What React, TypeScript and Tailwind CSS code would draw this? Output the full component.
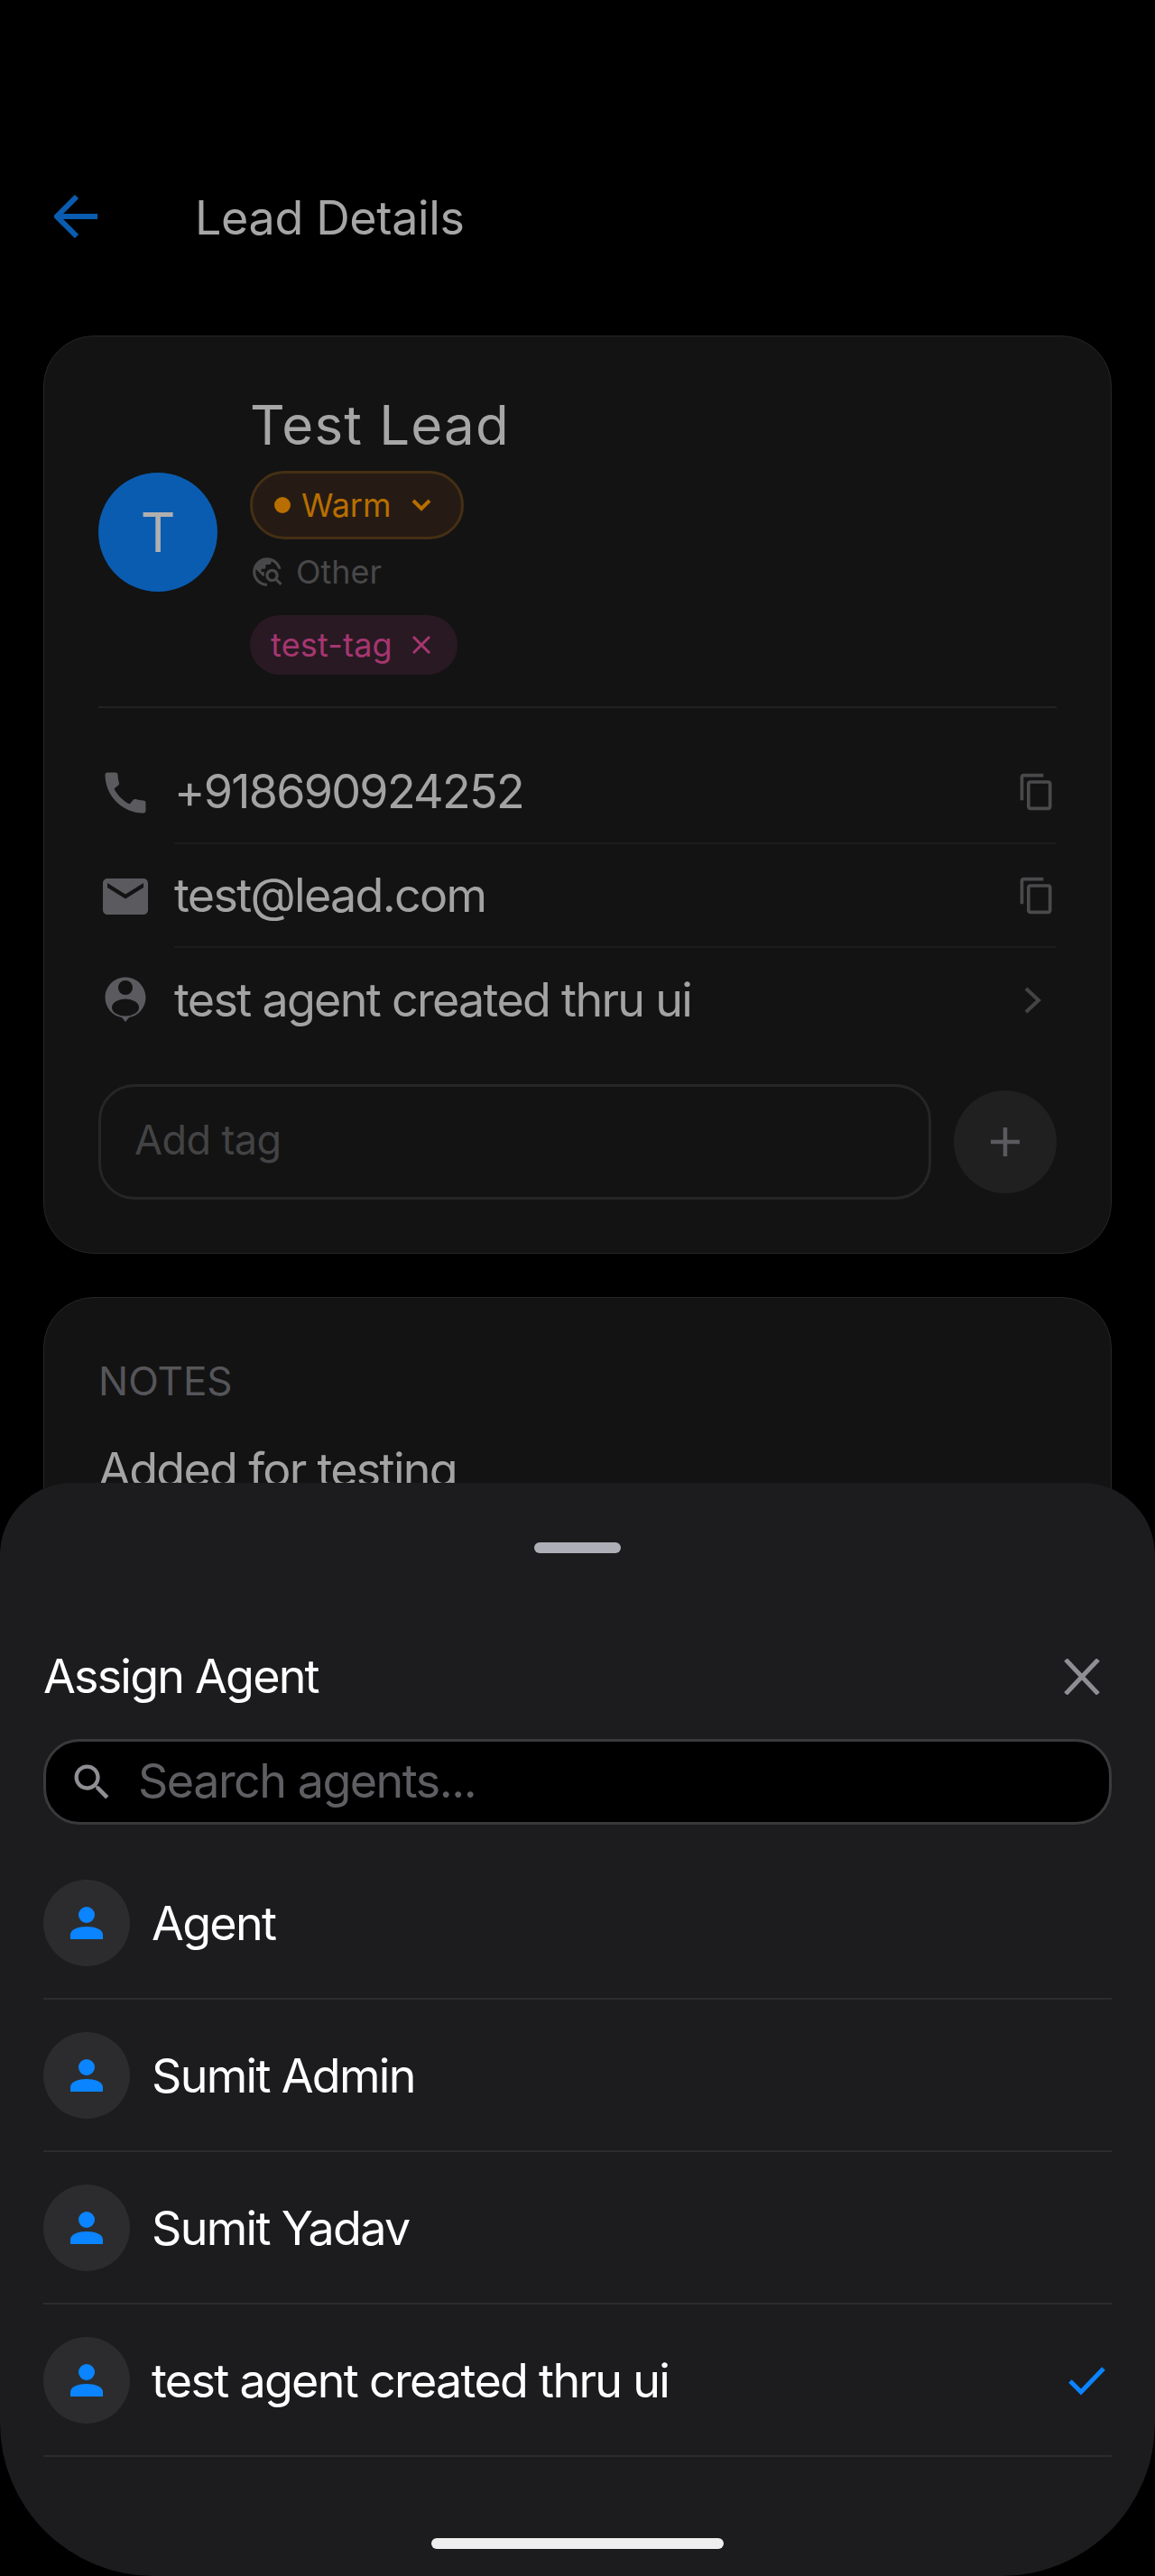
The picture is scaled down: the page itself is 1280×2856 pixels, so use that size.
import React from 'react';

const agents = ['Agent', 'Sumit Admin', 'Sumit Yadav', 'test agent created thru ui'];

const CopyIcon = () => (
    <svg width="44" height="44" viewBox="0 0 24 24" fill="#4a4a4c" className="shrink-0">
        <path d="M16 1H4c-1.1 0-2 .9-2 2v14h2V3h12V1zm3 4H8c-1.1 0-2 .9-2 2v14c0 1.1.9 2 2 2h11c1.1 0 2-.9 2-2V7c0-1.1-.9-2-2-2zm0 16H8V7h11v14z" />
    </svg>
);

const PhoneIcon = () => (
    <svg width="60" height="60" viewBox="0 0 24 24" fill="#5a5a5f">
        <path d="M20.01 15.38c-1.23 0-2.42-.2-3.53-.56-.35-.12-.74-.03-1.01.24l-1.57 1.97c-2.83-1.35-5.48-3.9-6.89-6.83l1.95-1.66c.27-.28.35-.67.24-1.02-.37-1.11-.56-2.3-.56-3.53 0-.54-.45-.99-.99-.99H4.19C3.65 3 3 3.24 3 3.99 3 13.28 10.73 21 20.01 21c.71 0 .99-.63.99-1.18v-3.45c0-.54-.45-.99-.99-.99z" />
    </svg>
);

const MailIcon = () => (
    <svg width="60" height="60" viewBox="0 0 24 24" fill="#5a5a5f">
        <path d="M20 4H4c-1.1 0-1.99.9-1.99 2L2 18c0 1.1.9 2 2 2h16c1.1 0 2-.9 2-2V6c0-1.1-.9-2-2-2zm0 4l-8 5-8-5V6l8 5 8-5v2z" />
    </svg>
);

// round badge with head and body cut out, small tip at the bottom
const AgentPinIcon = () => (
    <svg width="60" height="60" viewBox="0 0 60 60">
        <path d="M30 4.500c12.400 0 22.500 10 22.500 22.500 0 11-8 20.200-18.500 22.100L30 54l-4-4.900C15.500 47.200 7.500 38 7.500 27 7.500 14.500 17.600 4.500 30 4.500z" fill="#5a5a5f" />
        <circle cx="30" cy="16" r="8" fill="#131313" />
        <ellipse cx="30" cy="38" rx="15" ry="9.500" fill="#131313" />
    </svg>
);

const TravelExploreIcon = () => (
    <svg width="38" height="38" viewBox="0 0 24 24" fill="#48484a" className="shrink-0">
        <path d="M19.3 16.9c.4-.7.7-1.500.7-2.400 0-2.500-2-4.500-4.500-4.500S11 12 11 14.500s2 4.500 4.500 4.500c.9 0 1.700-.3 2.400-.7l3.200 3.200 1.400-1.400-3.200-3.200zm-3.800.1c-1.400 0-2.500-1.100-2.500-2.500s1.100-2.500 2.500-2.500 2.500 1.100 2.500 2.500-1.100 2.500-2.500 2.500zM12 20v2C6.480 22 2 17.520 2 12S6.480 2 12 2c4.840 0 8.870 3.440 9.800 8h-2.070c-.64-2.460-2.400-4.470-4.730-5.410V5c0 1.100-.9 2-2 2h-2v2c0 .55-.45 1-1 1H8v2h2v3H9l-4.790-4.790C4.080 10.790 4 11.380 4 12c0 4.410 3.590 8 8 8z" />
    </svg>
);

const PersonIcon = () => (
    <svg width="36" height="36" viewBox="0 0 36 36" fill="#0a84ff">
        <circle cx="18" cy="9" r="9" />
        <path d="M0 36V31C0 25 9 22 18 22s18 3 18 9v5H0z" />
    </svg>
);

const ContactRow: React.FC<{icon: React.ReactNode; text: string; right: React.ReactNode; last?: boolean}> = ({icon, text, right, last}) => (
    <div className="flex items-center h-[115px]">
        <div className="w-[60px] shrink-0 flex justify-center">{icon}</div>
        <div className={`flex-1 ml-[24px] h-full flex items-center justify-between ${last ? '' : 'border-b-2 border-[#1c1c1c]'}`}>
            <span className="pt-[1px] text-[52px] leading-[60px] tracking-[-1.7px] text-[#a3a3a3]">{text}</span>
            {right}
        </div>
    </div>
);

export default function App() {
    return (
        <div className="relative w-[1280px] h-[2856px] bg-black overflow-hidden font-['Inter',sans-serif]">
            <div className="pt-[200px]">
                <div className="flex items-center h-[80px] pl-[60px]">
                    <svg width="48" height="48" viewBox="0 0 48 48" fill="none" stroke="#0a5cb0" strokeWidth="6">
                        <path d="M48 24H3" />
                        <path d="M25 2L3 24l22 22" />
                    </svg>
                    <span className="ml-[108px] pt-[4px] text-[52px] leading-[80px] tracking-[-0.35px] text-[#a6a6a6]">Lead Details</span>
                </div>

                <div className="mx-[48px] mt-[92px] h-[1018px] rounded-[56px] bg-[#131313] border border-[#262626] px-[60px] pt-[59px]">
                    <div className="flex items-center gap-[36px] border-b-2 border-[#222222] pb-[35px]">
                        <div className="w-[132px] h-[132px] rounded-full bg-[#0a5cb0] flex items-center justify-center text-[60px] text-[#b0b0b0]">T</div>
                        <div className="flex flex-col items-start">
                            <div className="h-[80px] text-[60px] leading-[78px] tracking-[1.2px] text-[#a6a6a6]">Test Lead</div>
                            <div className="mt-[10px] h-[76px] rounded-full bg-[#251b14] border-[3px] border-[#452f14] flex items-center pl-[24px] pr-[32px]">
                                <div className="w-[18px] h-[18px] rounded-full bg-[#b86e00]" />
                                <span className="ml-[12px] text-[36px] text-[#b86e00]">Warm</span>
                                <svg width="24" height="16" viewBox="0 0 24 16" fill="none" stroke="#b86e00" strokeWidth="4" className="ml-[21px]">
                                    <path d="M3 3l9 9 9-9" />
                                </svg>
                            </div>
                            <div className="mt-[15px] h-[42px] flex items-center text-[36px] text-[#48484a]">
                                <TravelExploreIcon />
                                <span className="ml-[13px]">Other</span>
                            </div>
                            <div className="mt-[27px] h-[66px] rounded-full bg-[#291923] flex items-center pl-[23px] pr-[30px]">
                                <span className="text-[36px] tracking-[0.2px] text-[#a63670]">test-tag</span>
                                <svg width="20" height="20" viewBox="0 0 20 20" fill="none" stroke="#a63670" strokeWidth="3" className="ml-[22px]">
                                    <path d="M1 1l18 18M19 1L1 19" />
                                </svg>
                            </div>
                        </div>
                    </div>

                    <div className="mt-[36px]">
                        <ContactRow icon={<PhoneIcon />} text="+918690924252" right={<CopyIcon />} />
                        <ContactRow icon={<MailIcon />} text="test@lead.com" right={<CopyIcon />} />
                        <ContactRow
                            icon={<AgentPinIcon />}
                            text="test agent created thru ui"
                            last
                            right={
                                <svg width="34" height="30" viewBox="0 0 34 30" fill="none" stroke="#444446" strokeWidth="4" className="mr-[3px]">
                                    <path d="M3 2l14 13L3 28" />
                                </svg>
                            }
                        />
                    </div>

                    <div className="mt-[36px] flex items-center gap-[25px]">
                        <div className="flex-1 h-[128px] rounded-[40px] border-[3px] border-[#262626] flex items-center pl-[37px] pb-[4px] text-[45px] tracking-[-0.6px] text-[#434345]">Add tag</div>
                        <div className="w-[114px] h-[114px] rounded-full bg-[#202020] flex items-center justify-center">
                            <svg width="32" height="32" viewBox="0 0 32 32" fill="none" stroke="#5a5a5f" strokeWidth="4.500">
                                <path d="M16 0v32M0 16h32" />
                            </svg>
                        </div>
                    </div>
                </div>

                <div className="mx-[48px] mt-[48px] h-[400px] rounded-[56px] bg-[#131313] border border-[#262626] px-[60px] pt-[60px]">
                    <div className="h-[64px] text-[44px] leading-[64px] text-[#55555a]">NOTES</div>
                    <div className="mt-[32px] text-[52px] leading-[70px] tracking-[-1.7px] text-[#a3a3a3]">Added for testing</div>
                </div>
            </div>

            {/* bottom sheet over the page */}
            <div className="absolute left-0 right-0 bottom-0 h-[1212px] bg-[#1c1c1e] rounded-t-[80px] rounded-b-[170px] pt-[66px] px-[48px]">
                <div className="mx-auto w-[96px] h-[12px] rounded-full bg-[#aeaeb8]" />
                <div className="mt-[98px] h-[78px] flex items-center justify-between">
                    <span className="text-[52px] tracking-[-1.8px] text-white">Assign Agent</span>
                    <svg width="40" height="40" viewBox="0 0 40 40" fill="none" stroke="#8e8e93" strokeWidth="5" className="mr-[13px] mb-[1px]">
                        <path d="M2 1l36 38M38 1L2 39" />
                    </svg>
                </div>
                <div className="mt-[30px] h-[95px] rounded-[40px] bg-black border-[3px] border-[#3a3a3c] flex items-center pl-[25px]">
                    <svg width="52" height="52" viewBox="0 0 24 24" fill="#8e8e93">
                        <path d="M15.500 14h-.79l-.28-.27C15.410 12.590 16 11.110 16 9.500 16 5.910 13.090 3 9.500 3S3 5.910 3 9.500 5.910 16 9.500 16c1.610 0 3.090-.59 4.230-1.570l.27.28v.79l5 4.990L20.490 19l-4.990-5zm-6 0C7.010 14 5 11.990 5 9.500S7.010 5 9.500 5 14 7.010 14 9.500 11.990 14 9.500 14z" />
                    </svg>
                    <span className="ml-[25px] pb-[2px] text-[52px] tracking-[-1.5px] text-[#5f5f63]">Search agents...</span>
                </div>

                <div className="mt-[25px]">
                    {agents.map((name, i) => (
                        <div key={name} className="h-[169px] flex items-center border-b-2 border-[#2c2c2e]">
                            <div className="w-[96px] h-[96px] rounded-full bg-[#2c2c2e] flex items-center justify-center shrink-0">
                                <PersonIcon />
                            </div>
                            <span className="flex-1 ml-[24px] pt-[2px] text-[52px] tracking-[-1.7px] text-white">{name}</span>
                            {i === 3 && (
                                <svg width="44" height="34" viewBox="0 0 44 34" fill="none" stroke="#0a84ff" strokeWidth="5" className="mr-[6px]">
                                    <path d="M4 18l12 12L41 4" />
                                </svg>
                            )}
                        </div>
                    ))}
                </div>

                <div className="mt-[90px] mx-auto w-[324px] h-[12px] rounded-full bg-[#eeeeee]" />
            </div>
        </div>
    );
}
